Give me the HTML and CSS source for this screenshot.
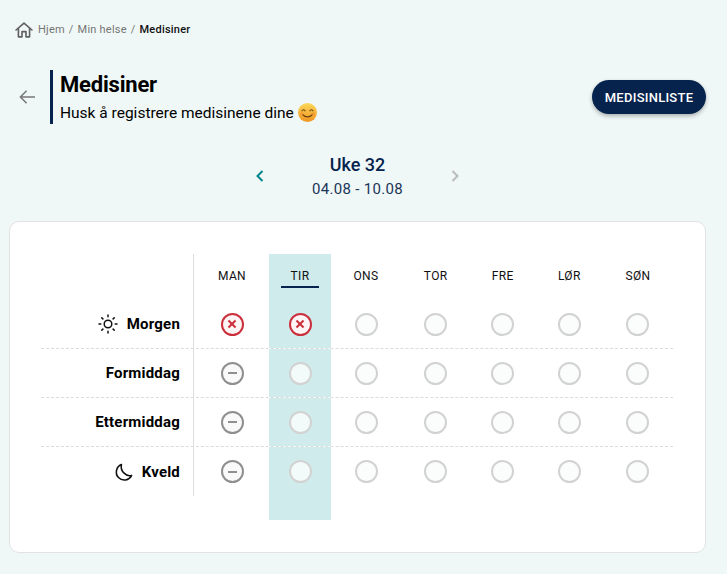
FILE: index.html
```html
<!DOCTYPE html>
<html lang="no">
<head>
    <meta charset="UTF-8">
    <meta name="viewport" content="width=device-width, initial-scale=1.0">
    <title>Medisiner</title>
    <link rel="stylesheet" href="styles.css">
</head>
<body>
    <nav class="breadcrumb">
        <svg class="home-icon" viewBox="0 0 20 20" width="18" height="18" fill="none" stroke="#5f5f5f" stroke-width="1.8" stroke-linejoin="round" stroke-linecap="round">
            <path d="M1.2 10 10 2.4 18.8 10"/>
            <path d="M3.8 8.4V17.6H7.8V11.8H12.2V17.6H16.2V8.4"/>
        </svg>
        <span>Hjem</span><span class="sep">/</span><span>Min helse</span><span class="sep">/</span><strong>Medisiner</strong>
    </nav>

    <header class="page-head">
        <svg class="back-icon" viewBox="0 0 16 14" width="16" height="14" fill="none" stroke="#777" stroke-width="1.5">
            <path d="M16 7H1.4M7.6 .8 1.4 7l6.2 6.2"/>
        </svg>
        <div class="title-block">
            <h1>Medisiner</h1>
            <p>Husk å registrere medisinene dine
                <svg class="emoji" viewBox="0 0 18 18" width="19" height="19">
                    <defs>
                        <linearGradient id="face" x1="0" y1="0" x2="0" y2="1">
                            <stop offset="0" stop-color="#fcd85a"/>
                            <stop offset="1" stop-color="#ef951f"/>
                        </linearGradient>
                    </defs>
                    <circle cx="9" cy="9" r="9" fill="url(#face)"/>
                    <circle cx="3.6" cy="10.4" r="1.7" fill="#f0862e" opacity=".5"/>
                    <circle cx="14.4" cy="10.4" r="1.7" fill="#f0862e" opacity=".5"/>
                    <path d="M3.6 7.8C4.3 6 6.2 6 6.9 7.8M11.1 7.8C11.8 6 13.7 6 14.4 7.8" fill="none" stroke="#6e4310" stroke-width="1"/>
                    <path d="M4.8 11.2C6.5 13.8 11.5 13.8 13.2 11.2" fill="none" stroke="#6e4310" stroke-width="1.1" stroke-linecap="round"/>
                </svg>
            </p>
        </div>
        <button class="list-btn">MEDISINLISTE</button>
    </header>

    <section class="week-nav">
        <svg viewBox="0 0 8 12" width="8" height="12" fill="none" stroke="#00868a" stroke-width="2"><path d="M6.5 1 1.5 6l5 5"/></svg>
        <div class="week-label">
            <h2>Uke 32</h2>
            <p>04.08 - 10.08</p>
        </div>
        <svg viewBox="0 0 8 12" width="8" height="12" fill="none" stroke="#bbb" stroke-width="2"><path d="M1.5 1l5 5-5 5"/></svg>
    </section>

    <main class="card">
        <div class="row head-row">
            <div class="label"></div>
            <div class="cell">MAN</div>
            <div class="cell today"><span class="today-mark">TIR</span></div>
            <div class="cell">ONS</div>
            <div class="cell">TOR</div>
            <div class="cell">FRE</div>
            <div class="cell">LØR</div>
            <div class="cell">SØN</div>
        </div>

        <div class="row">
            <div class="label">
                <svg viewBox="0 0 20 20" width="20" height="20" fill="none" stroke="#111" stroke-width="1.5" stroke-linecap="round">
                    <circle cx="10" cy="10" r="3.8"/>
                    <path d="M10 1v1.8M10 17.2V19M1 10h1.8M17.2 10H19M3.7 3.7l1.2 1.2M15.1 15.1l1.2 1.2M3.7 16.3l1.2-1.2M15.1 4.9l1.2-1.2"/>
                </svg>
                Morgen
            </div>
            <div class="cell"><span class="dot missed"></span></div>
            <div class="cell today"><span class="dot missed"></span></div>
            <div class="cell"><span class="dot"></span></div>
            <div class="cell"><span class="dot"></span></div>
            <div class="cell"><span class="dot"></span></div>
            <div class="cell"><span class="dot"></span></div>
            <div class="cell"><span class="dot"></span></div>
        </div>

        <div class="row">
            <div class="label">Formiddag</div>
            <div class="cell"><span class="dot skipped"></span></div>
            <div class="cell today"><span class="dot"></span></div>
            <div class="cell"><span class="dot"></span></div>
            <div class="cell"><span class="dot"></span></div>
            <div class="cell"><span class="dot"></span></div>
            <div class="cell"><span class="dot"></span></div>
            <div class="cell"><span class="dot"></span></div>
        </div>

        <div class="row">
            <div class="label">Ettermiddag</div>
            <div class="cell"><span class="dot skipped"></span></div>
            <div class="cell today"><span class="dot"></span></div>
            <div class="cell"><span class="dot"></span></div>
            <div class="cell"><span class="dot"></span></div>
            <div class="cell"><span class="dot"></span></div>
            <div class="cell"><span class="dot"></span></div>
            <div class="cell"><span class="dot"></span></div>
        </div>

        <div class="row last-row">
            <div class="label">
                <svg viewBox="0 0 20 20" width="20" height="20" fill="none" stroke="#111" stroke-width="1.6" stroke-linecap="round" stroke-linejoin="round">
                    <path d="M8.4 2.6A8 8 0 1 0 18.600 13.400C13.600 15 7 9.500 8.400 2.600Z"/>
                </svg>
                Kveld
            </div>
            <div class="cell"><span class="dot skipped"></span></div>
            <div class="cell today"><span class="dot"></span></div>
            <div class="cell"><span class="dot"></span></div>
            <div class="cell"><span class="dot"></span></div>
            <div class="cell"><span class="dot"></span></div>
            <div class="cell"><span class="dot"></span></div>
            <div class="cell"><span class="dot"></span></div>
        </div>

        <div class="row tail-row">
            <div></div>
            <div></div>
            <div class="today"></div>
        </div>
    </main>
</body>
</html>
```

FILE: styles.css
```css
/* Basic Styles */
body {
    font-family: Roboto, "Liberation Sans", sans-serif;
    margin: 0;
    height: 574px;
    overflow: hidden;
    background: #f0f8f7;
    color: #000;
}

/* Breadcrumb */
.breadcrumb {
    display: flex;
    align-items: center;
    padding: 19px 0 0 15px;
    height: 21px;
    font-size: 11px;
    letter-spacing: 0.22px;
    color: #757575;
}

.home-icon {
    margin-right: 5px;
}

.sep {
    margin: 0 4px;
}

.breadcrumb strong {
    font-weight: 500;
    color: #111;
}

/* Header */
.page-head {
    display: flex;
    align-items: center;
    padding: 30px 21px 0 19px;
}

.back-icon {
    margin-right: 15px;
}

.title-block {
    flex: 1;
    height: 54px;
    border-left: 3px solid #05234d;
    padding-left: 7px;
}

.title-block h1 {
    margin: 0;
    font-size: 22px;
    line-height: 30px;
    font-weight: 700;
    letter-spacing: -0.2px;
}

.title-block p {
    margin: 1px 0 0;
    font-size: 15.5px;
    line-height: 24px;
}

.emoji {
    vertical-align: -4px;
}

.list-btn {
    align-self: flex-start;
    height: 34px;
    width: 114px;
    margin-top: 10px;
    padding: 0;
    border: none;
    border-radius: 17px;
    background: #05234d;
    color: #fff;
    font-family: inherit;
    font-size: 13px;
    font-weight: 500;
    letter-spacing: 0.25px;
    box-shadow: 0 2px 4px rgba(0, 0, 0, 0.3);
}

/* Week navigation */
.week-nav {
    display: flex;
    justify-content: center;
    align-items: center;
    gap: 22px;
    padding-top: 28px;
    margin-left: -12px;
}

.week-label {
    width: 143px;
    text-align: center;
    color: #05234d;
}

.week-label h2 {
    margin: 0;
    font-size: 18px;
    line-height: 26px;
    font-weight: 500;
}

.week-label p {
    margin: 0;
    font-size: 15px;
    line-height: 22px;
    letter-spacing: 0.33px;
    color: #1a3558;
}

/* Schedule card */
.card {
    height: 298px;
    margin: 21px 21px 0 9px;
    padding: 32px 32px 0 31px;
    background: #fff;
    border: 1px solid #e2e2e2;
    border-radius: 10px;
}

.row {
    display: grid;
    grid-template-columns: 155.5px 71px 65px 67px 72.4px 61.6px 71.6px 65.8px;
    height: 48px;
    border-bottom: 1px dashed #dcdcdc;
}

.head-row {
    height: 46px;
    border-bottom: none;
}

.last-row {
    height: 49px;
    border-bottom: none;
}

.tail-row {
    height: 24px;
    border-bottom: none;
}

.label {
    display: flex;
    justify-content: flex-end;
    align-items: center;
    gap: 9px;
    margin-right: 2.5px;
    padding-right: 13px;
    border-right: 1px solid #dcdcdc;
    font-size: 15px;
    font-weight: 700;
    letter-spacing: 0.2px;
}

.cell {
    display: flex;
    justify-content: center;
    align-items: center;
    font-size: 12px;
    letter-spacing: 0.35px;
    color: #111;
}

.head-row .cell {
    padding-bottom: 2px;
}

.today {
    margin: 0 1.5px;
    background: #d0ebeb;
}

.today-mark {
    margin-top: 5px;
    padding: 0 9.5px 3px;
    border-bottom: 2px solid #05234d;
}

/* Status circles */
.dot {
    position: relative;
    display: block;
    box-sizing: border-box;
    width: 23px;
    height: 23px;
    border: 2px solid #d2d2d2;
    border-radius: 50%;
    background: #fbfdfd;
}

.today .dot {
    background: #f3fbfa;
}

.dot.missed {
    border-color: #cc2f3c;
    background: #fdf5f5;
}

.dot.missed::before,
.dot.missed::after {
    content: "";
    position: absolute;
    left: 4.5px;
    top: 8.5px;
    width: 10px;
    height: 2px;
    background: #cc2f3c;
    transform: rotate(45deg);
}

.dot.missed::after {
    transform: rotate(-45deg);
}

.dot.skipped {
    border-color: #8f8f8f;
    background: #f9f9f9;
}

.dot.skipped::before {
    content: "";
    position: absolute;
    left: 5px;
    top: 8.5px;
    width: 9px;
    height: 2px;
    background: #8f8f8f;
}
```
